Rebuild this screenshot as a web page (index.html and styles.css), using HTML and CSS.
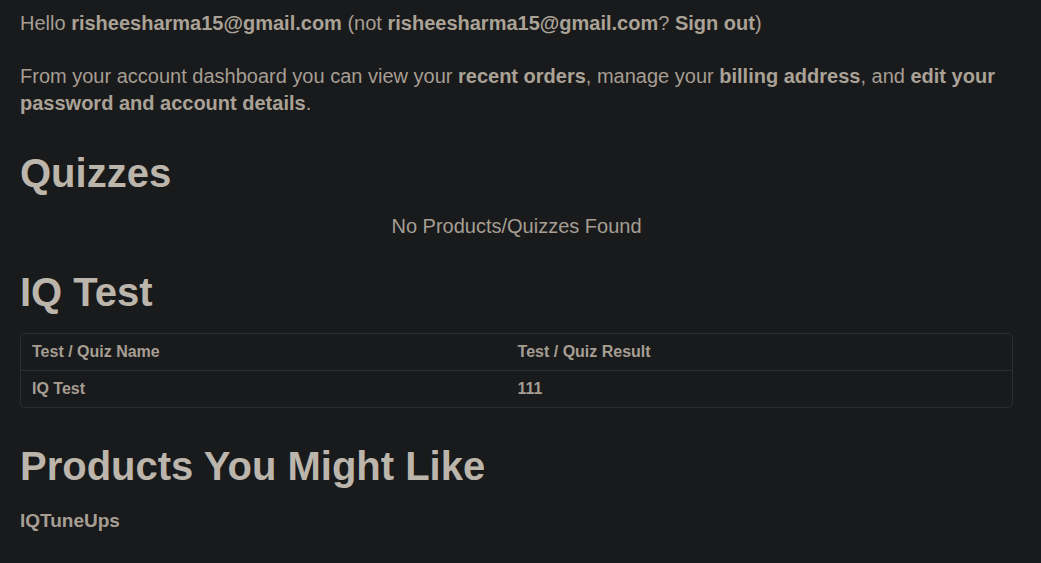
FILE: index.html
```html
<!DOCTYPE html>
<html lang="en">
<head>
<meta charset="utf-8">
<title>My Account</title>
<link rel="stylesheet" href="styles.css">
</head>
<body>
<main class="account">
  <p class="intro">Hello <strong>risheesharma15@gmail.com</strong> (not <strong>risheesharma15@gmail.com</strong>? <a class="link" href="#">Sign out</a>)</p>
  <p class="intro intro-last">From your account dashboard you can view your <a class="link" href="#">recent orders</a>, manage your <a class="link" href="#">billing address</a>, and <a class="link" href="#">edit your password and account details</a>.</p>

  <h2 class="section-title">Quizzes</h2>
  <p class="empty">No Products/Quizzes Found</p>

  <h2 class="section-title">IQ Test</h2>
  <div class="table-wrap">
    <table class="results">
      <thead>
        <tr><th class="col-name">Test / Quiz Name</th><th>Test / Quiz Result</th></tr>
      </thead>
      <tbody>
        <tr><td>IQ Test</td><td>111</td></tr>
      </tbody>
    </table>
  </div>

  <h2 class="section-title products-title">Products You Might Like</h2>
  <a class="product" href="#">IQTuneUps</a>
</main>
</body>
</html>
```
FILE: styles.css
```css
html, body {
  margin: 0;
  padding: 0;
  background: #191a1c;
}
body {
  font-family: "Liberation Sans", Arial, sans-serif;
  color: #a69e93;
  font-size: 20px;
  line-height: 27px;
}
.account {
  padding: 10px 28px 20px 20px;
}
.intro {
  margin: 0 0 26px;
}
.intro-last {
  margin-bottom: 32px;
}
.intro strong,
.link {
  font-weight: bold;
  color: #aaa296;
  text-decoration: none;
}
.section-title {
  margin: 0;
  font-size: 40px;
  line-height: 48px;
  font-weight: bold;
  color: #bcb5ab;
}
.empty {
  margin: 16px 0 28px;
  text-align: center;
  color: #a69e93;
}
.table-wrap {
  margin-top: 17px;
  border: 1px solid #2b2d30;
  border-radius: 5px;
  overflow: hidden;
}
.results {
  width: 100%;
  border-collapse: collapse;
  font-size: 16px;
  line-height: 20px;
  font-weight: bold;
  color: #a69e93;
}
.results th,
.results td {
  text-align: left;
  padding: 8px 11px;
}
.results thead tr {
  border-bottom: 1px solid #2b2d30;
}
.col-name {
  width: 49%;
}
.products-title {
  margin-top: 34px;
}
.product {
  display: block;
  margin-top: 17px;
  font-size: 19px;
  font-weight: bold;
  color: #a69e93;
  text-decoration: none;
}
```
